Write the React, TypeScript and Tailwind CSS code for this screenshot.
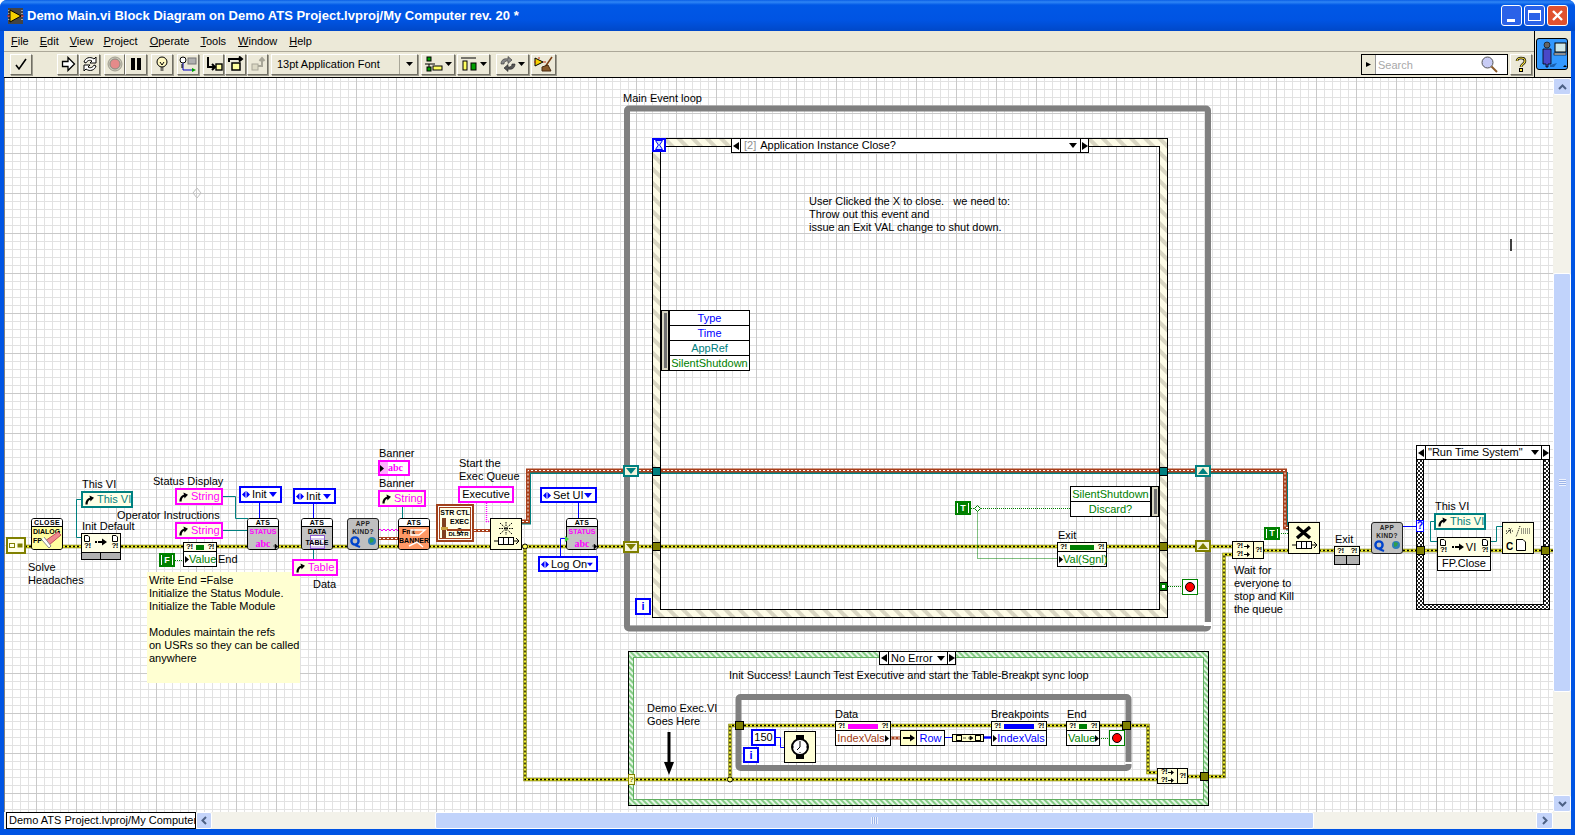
import React from 'react';

const Label: React.FC<{ className: string; children: React.ReactNode }> = ({ className, children }) => (
  <div className={`absolute whitespace-pre leading-[13px] text-black ${className}`}>{children}</div>
);

const Q = () => <span className="text-[8px] font-bold leading-[8px] tracking-[-0.5px] text-black">?!</span>;

const Tip: React.FC<{ dir: 'l' | 'r' }> = ({ dir }) => (
  <svg width="4" height="7" viewBox="0 0 4 7" className="shrink-0"><path d={dir === 'l' ? 'M0 0 L4 3.5 L0 7 Z' : 'M0 0 L4 3.5 L0 7 Z'} fill="#000" /></svg>
);

// property node: ?! row with a coloured bar over a text row
const PropNode: React.FC<{ className: string; bar: string; textClass: string; text: string; tip: 'l' | 'r' }> = ({ className, bar, textClass, text, tip }) => (
  <div className={`absolute flex flex-col border border-black bg-white ${className}`}>
    <div className="flex h-[9px] items-center justify-between border-b border-black bg-[#ffffe6] px-[2px]">
      <Q />
      <div className={`h-[5px] ${bar}`} />
      <Q />
    </div>
    <div className={`flex flex-1 items-center justify-between whitespace-pre px-[1px] text-[11px] leading-none ${textClass}`}>
      {tip === 'l' && <Tip dir="l" />}
      <span className="flex-1 text-center">{text}</span>
      {tip === 'r' && <Tip dir="r" />}
    </div>
  </div>
);

const RefArrow = () => (
  <svg width="9" height="10" viewBox="0 0 9 10" className="shrink-0">
    <path d="M1.5 9.5 C1.5 5.5 3 4 6 3.5" fill="none" stroke="#000" strokeWidth="2.2" />
    <path d="M4.5 0.5 L9 2.8 L5.5 6.5 Z" fill="#000" />
  </svg>
);

const RefBox: React.FC<{ className: string; children: React.ReactNode }> = ({ className, children }) => (
  <div className={`absolute flex items-center gap-[3px] whitespace-pre border-[2px] bg-[#ffffe6] pl-[2px] text-[11px] ${className}`}>
    <RefArrow />
    {children}
  </div>
);

const EnumBox: React.FC<{ className: string; text: string }> = ({ className, text }) => (
  <div className={`absolute flex items-center justify-between whitespace-pre border-[2px] border-[#0000ff] bg-white pl-[1px] pr-[3px] text-[11px] text-black ${className}`}>
    <span className="flex items-center gap-[2px]">
      <svg width="8" height="7" viewBox="0 0 8 7"><path d="M3.5 0 L0 3.5 L3.5 7 Z M4.5 0 L8 3.5 L4.5 7 Z" fill="#0000ff" /></svg>
      {text}
    </span>
    <svg width="8" height="5" viewBox="0 0 8 5"><path d="M0 0 H8 L4 5 Z" fill="#0000ff" /></svg>
  </div>
);

const SubVi: React.FC<{ className: string; title: string; bodyClass: string; children: React.ReactNode }> = ({ className, title, bodyClass, children }) => (
  <div className={`absolute flex h-[32px] w-[32px] flex-col overflow-hidden rounded-[3px] border border-black ${className}`}>
    <div className="flex h-[8px] items-center justify-center border-b border-black bg-white text-[7px] font-bold leading-none tracking-[0.4px]">{title}</div>
    <div className={`relative flex-1 ${bodyClass}`}>{children}</div>
  </div>
);

const StatusBody = () => (
  <>
    <div className="pt-[1px] text-center text-[7px] font-bold leading-[8px] text-[#ff00ff]">STATUS</div>
    <div className="mt-[3px] text-center text-[10px] font-bold leading-[9px] text-[#ff00ff] [font-family:'Liberation_Serif',serif]">abc</div>
    <svg width="5" height="5" viewBox="0 0 5 5" className="absolute bottom-0 right-0"><path d="M0 2 H3 M2 0 L5 2.5 L2 5 Z" fill="#000" stroke="#000" strokeWidth="0.5" /></svg>
  </>
);

const AppKind: React.FC<{ className: string }> = ({ className }) => (
  <div className={`absolute h-[32px] w-[32px] rounded-[3px] border border-[#222] bg-[#c0c0c0] ${className}`}>
    <div className="pt-[1px] text-center text-[6.5px] font-bold leading-[7.5px] tracking-[0.3px] text-[#222]">APP<br />KIND?</div>
    <svg width="30" height="14" viewBox="0 0 30 14" className="absolute bottom-0 left-0">
      <circle cx="7" cy="6" r="3.6" fill="none" stroke="#0044cc" strokeWidth="2.4" />
      <path d="M7 10 L12 12" stroke="#0044cc" strokeWidth="2" />
      <circle cx="24" cy="6" r="4" fill="#2c7fb8" />
      <path d="M22 3 L26 4 L25 7 L22 8 Z" fill="#2e9e4a" />
    </svg>
  </div>
);

const btnCls = 'flex h-[21px] shrink-0 items-center border border-t-white border-l-white border-r-[#716f64] border-b-[#716f64] bg-[#ece9d8] shadow-[1px_1px_0_#9d9b8e]';

const ToolBtn: React.FC<{ className: string; children?: React.ReactNode }> = ({ className, children }) => (
  <div className={`${btnCls} justify-center ${className}`}>{children}</div>
);

const Triangle = () => (
  <svg width="7" height="4" viewBox="0 0 7 4" className="ml-[2px]"><path d="M0 0 H7 L3.5 4 Z" fill="#000" /></svg>
);

const Ico: React.FC<{ w?: number; h?: number; children: React.ReactNode }> = ({ w = 16, h = 16, children }) => (
  <svg width={w} height={h} viewBox={`0 0 ${w} ${h}`}>{children}</svg>
);

const Toolbar = () => (
  <div className="flex h-[24px] items-center pl-[6px]">
    <ToolBtn className="w-[22px]">
      <Ico><path d="M3 9 L6 13 L13 3" fill="none" stroke="#000" strokeWidth="1.6" /></Ico>
    </ToolBtn>
    <ToolBtn className="ml-[25px] w-[21px]">
      <Ico><path d="M2.5 5.5 H8 V1.5 L14.5 8 L8 14.5 V10.5 H2.5 Z" fill="#fff" stroke="#000" strokeWidth="1.3" /></Ico>
    </ToolBtn>
    <ToolBtn className="ml-[1px] w-[21px]">
      <Ico>
        <path d="M2 6 C3 2 8 0 12 3 L14 1 V7 H8 L10 5 C8 3.5 5 4.5 4 7 Z" fill="#fff" stroke="#000" />
        <path d="M14 10 C13 14 8 16 4 13 L2 15 V9 H8 L6 11 C8 12.5 11 11.5 12 9 Z" fill="#fff" stroke="#000" />
      </Ico>
    </ToolBtn>
    <ToolBtn className="ml-[4px] w-[21px] bg-[#d8d5c4]">
      <Ico>
        <circle cx="8" cy="8" r="7" fill="#c9c7b8" stroke="#a09e90" />
        <circle cx="8" cy="8" r="5" fill="#e58a8a" stroke="#8a8a80" />
      </Ico>
    </ToolBtn>
    <ToolBtn className="w-[22px]">
      <Ico><rect x="3" y="2" width="4" height="12" fill="#000" /><rect x="9" y="2" width="4" height="12" fill="#000" /></Ico>
    </ToolBtn>
    <ToolBtn className="ml-[4px] w-[22px]">
      <Ico>
        <circle cx="8" cy="6" r="5" fill="#fff8c0" stroke="#000" />
        <path d="M6 6 L8 9 L10 6 M6.5 12 H9.5 M6.5 14 H9.5" fill="none" stroke="#000" />
      </Ico>
    </ToolBtn>
    <ToolBtn className="ml-[4px] w-[22px]">
      <Ico w={18} h={17}>
        <circle cx="4" cy="4" r="3" fill="#fff" stroke="#000" />
        <path d="M4 7 V14 H14" fill="none" stroke="#0000c0" />
        <rect x="9" y="2" width="8" height="6" fill="#b0b0b0" stroke="#777" />
        <path d="M4 9 H2 M4 11 H2" stroke="#000" />
        <path d="M13 12 L17 14 L13 16 Z" fill="#00a000" />
      </Ico>
    </ToolBtn>
    <ToolBtn className="ml-[4px] w-[21px]">
      <Ico w={18} h={16}>
        <path d="M3 1 V11 H9 M7 8 L10 11 L7 14" fill="none" stroke="#000" strokeWidth="2" />
        <rect x="11" y="8" width="6" height="6" fill="#ffffa0" stroke="#000" strokeWidth="1.4" />
      </Ico>
    </ToolBtn>
    <ToolBtn className="ml-[1px] w-[21px]">
      <Ico>
        <path d="M1 6 V3 H13 M11 0.5 L14 3 L11 5.5" fill="none" stroke="#000" strokeWidth="2" />
        <rect x="4" y="7" width="8" height="7" fill="#ffffa0" stroke="#000" strokeWidth="1.5" />
      </Ico>
    </ToolBtn>
    <ToolBtn className="ml-[1px] w-[21px]">
      <Ico>
        <rect x="2" y="8" width="6" height="6" fill="#dcd9c5" stroke="#a8a698" />
        <path d="M8 10 H12 V3 M9.5 5 L12 2 L14.5 5" fill="none" stroke="#a8a698" strokeWidth="2" />
      </Ico>
    </ToolBtn>
    <div className={`${btnCls} ml-[3px] w-[147px] justify-between pl-[5px]`}>
      <span className="whitespace-pre text-[11px] text-black">13pt Application Font</span>
      <span className="flex h-full w-[18px] items-center justify-center border-l border-[#a8a698]"><Triangle /></span>
    </div>
    <ToolBtn className="ml-[3px] w-[34px]">
      <Ico w={18} h={16}>
        <rect x="2" y="1" width="4" height="4" fill="#00a000" stroke="#000" />
        <path d="M0 8 H10 M4 8 V11" stroke="#000" />
        <rect x="8" y="10" width="9" height="4" fill="#ffff60" stroke="#000" />
        <rect x="2" y="11" width="4" height="4" fill="#00a000" stroke="#000" />
      </Ico>
      <Triangle />
    </ToolBtn>
    <ToolBtn className="ml-[2px] w-[33px]">
      <Ico w={18} h={16}>
        <path d="M1 2 H16" stroke="#000" />
        <rect x="3" y="5" width="4" height="9" fill="#ffff60" stroke="#000" />
        <rect x="11" y="7" width="5" height="7" fill="#00a000" stroke="#000" />
      </Ico>
      <Triangle />
    </ToolBtn>
    <ToolBtn className="ml-[6px] w-[33px]">
      <Ico>
        <path d="M1 8 C1 4 4 2 8 3 V0.5 L12 4 L8 7.5 V5 C5.5 4.5 4 6 4 8 Z" fill="#888" stroke="#333" strokeWidth="0.6" />
        <path d="M15 8 C15 12 12 14 8 13 V15.5 L4 12 L8 8.5 V11 C10.5 11.5 12 10 12 8 Z" fill="#555" stroke="#222" strokeWidth="0.6" />
      </Ico>
      <Triangle />
    </ToolBtn>
    <ToolBtn className="ml-[2px] w-[25px]">
      <Ico w={20} h={16}>
        <path d="M1 2 L9 6 L1 10 Z" fill="#f6d100" stroke="#000" />
        <path d="M0 6 H2 M9 6 H12 M5 1 V3" stroke="#c03010" />
        <path d="M18 1 L11 11" stroke="#7a3c10" strokeWidth="1.5" />
        <path d="M8 11 L14 9 L17 15 H8 Z" fill="#8a5a2b" stroke="#4a2a10" />
      </Ico>
    </ToolBtn>
    <div className="ml-auto flex h-[21px] w-[147px] border border-black bg-white">
      <div className="flex w-[14px] items-center justify-center border-r border-[#999] bg-[#ece9d8]">
        <svg width="5" height="5" viewBox="0 0 5 5"><path d="M0 0 L5 2.5 L0 5 Z" fill="#000" /></svg>
      </div>
      <span className="flex-1 pl-[2px] text-[11px] leading-[20px] text-[#a8a8a8]">Search</span>
      <svg width="17" height="17" viewBox="0 0 17 17" className="mr-[9px] mt-[1px]">
        <circle cx="6.5" cy="6.5" r="5.5" fill="#c8ccf5" stroke="#555" />
        <path d="M10.5 10.5 L16 16" stroke="#8a5a2b" strokeWidth="2" />
      </svg>
    </div>
    <ToolBtn className="ml-[2px] mr-[2px] w-[22px]">
      <svg width="12" height="16" viewBox="0 0 12 16">
        <path d="M2 5 C2 1 10 1 10 5 C10 8 6 8 6 11" fill="none" stroke="#000" strokeWidth="2.6" />
        <path d="M2 5 C2 1 10 1 10 5 C10 8 6 8 6 11" fill="none" stroke="#ffe640" strokeWidth="1.2" />
        <rect x="4.5" y="12.5" width="3" height="3" fill="#ffe640" stroke="#000" />
      </svg>
    </ToolBtn>
  </div>
);

const menus = ['File', 'Edit', 'View', 'Project', 'Operate', 'Tools', 'Window', 'Help'];
const menuGaps = ['mr-[11px]', 'mr-[11px]', 'mr-[10px]', 'mr-[12px]', 'mr-[11px]', 'mr-[12px]', 'mr-[12px]', ''];

// wire, structure and tunnel artwork of the block diagram, in page coordinates
const Wires = () => {
  const err = [
    'M25 546.5 H1232',
    'M1263 550.5 H1553',
    'M525 546.5 V779.5 H1157',
    'M730 779.5 V725.5 H1148 V772.5 H1157',
    'M1187 776.5 H1224 V554.5 H1233',
  ];
  return (
    <svg width="1575" height="835" viewBox="0 0 1575 835" className="absolute left-0 top-0">
      <defs>
        <pattern id="ev" width="10" height="10" patternUnits="userSpaceOnUse" patternTransform="rotate(-45)">
          <rect width="10" height="10" fill="#fdfbe6" />
          <rect width="4" height="10" fill="#d9d6c2" />
        </pattern>
        <pattern id="seq" width="4" height="4" patternUnits="userSpaceOnUse" patternTransform="rotate(-45)">
          <rect width="4" height="4" fill="#e6f7e6" />
          <rect width="2" height="4" fill="#86cc86" />
        </pattern>
        <pattern id="chk" width="4" height="4" patternUnits="userSpaceOnUse">
          <rect width="4" height="4" fill="#fff" />
          <rect width="2" height="2" fill="#222" />
          <rect x="2" y="2" width="2" height="2" fill="#222" />
        </pattern>
      </defs>
      {/* while loops */}
      <rect x="627" y="108.5" width="581" height="520" fill="none" stroke="#808080" strokeWidth="6" rx="2" />
      <rect x="1204" y="622" width="8" height="4" fill="#fff" />
      <rect x="738.5" y="697" width="390" height="71" fill="none" stroke="#808080" strokeWidth="6" rx="2" />
      <rect x="1125" y="762" width="7" height="2" fill="#fff" />
      {/* event, flat sequence and case frames */}
      <path fillRule="evenodd" d="M652.5 138.5 H1167.5 V617.5 H652.5 Z M660.5 146.5 V609.5 H1159.5 V146.5 Z" fill="url(#ev)" stroke="#000" shapeRendering="crispEdges" />
      <path fillRule="evenodd" d="M628.5 651.5 H1208.5 V805.5 H628.5 Z M633.5 657.5 V799.5 H1203.5 V657.5 Z" fill="url(#seq)" />
      <rect x="628.5" y="651.5" width="580" height="154" fill="none" stroke="#000" shapeRendering="crispEdges" />
      <rect x="633.5" y="657.5" width="570" height="142" fill="none" stroke="#5fae5f" shapeRendering="crispEdges" />
      <path fillRule="evenodd" d="M1416.5 445.5 H1549.5 V609.5 H1416.5 Z M1423.5 459.5 V604.5 H1543.5 V459.5 Z" fill="url(#chk)" stroke="#000" shapeRendering="crispEdges" />

      {/* queue reference */}
      <path d="M522 523.5 H530 V473 H1287 V529.5 H1289" fill="none" stroke="#008080" strokeWidth="2" />
      <path d="M522 521.5 H528 V470.5 H1285 V527.5 H1289" fill="none" stroke="#a8401c" strokeWidth="4" />
      <path d="M522 521.5 H528 V470.5 H1285 V527.5 H1289" fill="none" stroke="#fff" strokeWidth="1" strokeDasharray="2 2" />
      {/* error clusters */}
      {err.map(d => (
        <g key={d} fill="none">
          <path d={d} stroke="#808000" strokeWidth="3.4" />
          <path d={d} stroke="#f4f430" strokeWidth="2" />
          <path d={d} stroke="#000" strokeWidth="1.4" strokeDasharray="2 2" />
        </g>
      ))}
      <circle cx="525" cy="546.5" r="2.5" fill="#ffff60" stroke="#000" />
      <circle cx="730" cy="779.5" r="2.5" fill="#ffff60" stroke="#000" />

      {/* blue numeric and enum wires */}
      <g fill="none" stroke="#0000ff" strokeWidth="1">
        <path d="M259.5 502 V518 M313.5 504 V518 M578.5 503 V518 M560.5 556 V538.5 H567" />
        <path d="M776 737.5 H780.5 V747.5 H785 M944 737.5 H952" />
        <path d="M1403 526.5 H1416" />
      </g>
      <path d="M983 737.5 H992" stroke="#0000ff" strokeWidth="2.4" />
      {/* VI server reference wires */}
      <g fill="none" stroke="#008080" strokeWidth="1">
        <path d="M81 499.5 H76.5 V537.5 H82" />
        <path d="M223 496.5 H235.5 V518.5 H248 M223 530.5 H248" />
        <path d="M313.5 549 V560 M402.5 507 V519" />
        <path d="M1435 521.5 H1430.5 V541.5 H1438 M1491 541.5 H1496.5 V526.5 H1503" />
      </g>
      {/* refnum and string wires */}
      <path d="M379 538.5 H399" stroke="#a8401c" strokeWidth="3" />
      <path d="M379 538.5 H399" stroke="#fff" strokeWidth="1" strokeDasharray="2 2" />
      <path d="M474 530.5 H490" stroke="#a8401c" strokeWidth="3" />
      <path d="M474 530.5 H490" stroke="#fff" strokeWidth="1" strokeDasharray="2 2" />
      <path d="M890 738 H901" stroke="#a8401c" strokeWidth="3" />
      <path d="M890 738 H901" stroke="#fff" strokeWidth="1" strokeDasharray="2 2" />
      <path d="M379 530 q1 -2 2 0 t2 0 t2 0 t2 0 t2 0 t2 0 t2 0 t2 0 t2 0 t2 0" fill="none" stroke="#ff00ff" />
      <path d="M486.5 503 V521.5 H490" fill="none" stroke="#ff00ff" strokeDasharray="1 1" strokeWidth="1.4" />
      {/* boolean wires */}
      <g fill="none" stroke="#008000" strokeDasharray="1 1">
        <path d="M175 560.5 H184" />
        <path d="M971 508.5 H1070 M977.5 508.5 V558.5 H1058" />
        <path d="M1168 586.5 H1183" />
        <path d="M1099 738.5 H1110" />
        <path d="M1279 533.5 H1289" />
      </g>
      <path d="M977.5 505.5 L980.5 508.5 L977.5 511.5 L974.5 508.5 Z" fill="#fff" stroke="#008000" />
      {/* the arrow note */}
      <path d="M669 732 V764" stroke="#000" strokeWidth="3" />
      <path d="M664 762 H674 L669 775 Z" fill="#000" />
      {/* diagram grid marker and text cursor */}
      <path d="M197 188 L201 193 L197 198 L193 193 Z" fill="none" stroke="#c0c0c0" />
      <path d="M1511 239 V251" stroke="#000" strokeWidth="1.5" />
    </svg>
  );
};

const TunnelUp: React.FC<{ className: string; fill: string }> = ({ className, fill }) => (
  <div className={`absolute flex h-[12px] w-[16px] items-center justify-center border-2 bg-[#f4f4dc] ${className}`}>
    <svg width="10" height="6" viewBox="0 0 10 6"><path d={fill === 'down' ? 'M0 0 H10 L5 6 Z' : 'M0 6 H10 L5 0 Z'} fill="currentColor" /></svg>
  </div>
);

const Tun: React.FC<{ className: string }> = ({ className }) => (
  <div className={`absolute h-[9px] w-[9px] border border-black ${className}`} />
);

const EventRows: React.FC<{ className: string; rows: { t: string; c: string }[]; side: 'l' | 'r' }> = ({ className, rows, side }) => (
  <div className={`absolute flex ${side === 'r' ? 'flex-row-reverse' : ''} ${className}`}>
    <div className="flex w-[8px] justify-center border border-black bg-[#d9d6c2] py-[2px]">
      <div className="w-[3px] bg-[#707070]" />
    </div>
    <div className="flex min-w-0 flex-1 flex-col border border-black bg-white">
      {rows.map(r => (
        <div key={r.t} className={`flex min-h-0 flex-1 items-center justify-center whitespace-pre border-b border-black text-[11px] leading-none last:border-b-0 ${r.c}`}>{r.t}</div>
      ))}
    </div>
  </div>
);

const Diagram = () => (
  <div className="absolute left-[-5px] top-[-78px] h-[835px] w-[1575px] text-[11px]">
    <Wires />

    {/* left cluster */}
    <div className="absolute left-[6px] top-[537px] flex h-[17px] w-[20px] items-center justify-center border-2 border-[#808000] bg-[#ffffe6]">
      <svg width="14" height="7" viewBox="0 0 14 7"><rect x="0.5" y="1.5" width="5" height="4" fill="none" stroke="#808000" /><rect x="8.5" y="1.5" width="5" height="4" fill="#808000" /></svg>
    </div>
    <SubVi className="left-[31px] top-[518px]" title="CLOSE" bodyClass="bg-[#ffffa0]">
      <div className="pl-[1px] text-[7px] font-bold leading-[9px] text-black">DIALOG<br />FP</div>
      <svg width="24" height="18" viewBox="0 0 24 18" className="absolute bottom-0 right-0">
        <path d="M20 1 L23 4 L11 14 L7 10 Z" fill="#f08a90" stroke="#c05060" />
        <path d="M6 6 L13 15 L11 17 L4 9" fill="#fff" stroke="#888" />
      </svg>
    </SubVi>
    <Label className="left-[28px] top-[561px]">Solve{'\n'}Headaches</Label>

    <Label className="left-[82px] top-[478px]">This VI</Label>
    <RefBox className="left-[81px] top-[491px] h-[17px] w-[52px] border-[#008080] text-[#008080]">This VI</RefBox>
    <Label className="left-[82px] top-[520px]">Init Default</Label>
    <div className="absolute left-[81px] top-[533px] flex h-[27px] w-[40px] flex-col border border-black">
      <div className="flex h-[18px] items-start justify-between bg-[#ffffe6] px-[2px] pt-[1px]">
        <div className="flex flex-col items-center leading-[8px]">
          <svg width="6" height="7" viewBox="0 0 6 7"><path d="M0.5 0.5 H4 L5.5 2 V6.5 H0.5 Z" fill="#fff" stroke="#000" /></svg>
          <Q />
        </div>
        <svg width="12" height="8" viewBox="0 0 12 8" className="mt-[3px]"><path d="M0 3 H2 V5 H0 Z M3 3 H7 V0.5 L12 4 L7 7.5 V5 H3 Z" fill="#000" /></svg>
        <div className="flex flex-col items-center leading-[8px]">
          <svg width="6" height="7" viewBox="0 0 6 7"><path d="M0.5 0.5 H4 L5.5 2 V6.5 H0.5 Z" fill="#fff" stroke="#000" /></svg>
          <Q />
        </div>
      </div>
      <div className="flex flex-1 border-t border-black bg-[#b0b0b0]">
        <div className="w-[19px] border-r border-black" />
      </div>
    </div>

    <Label className="left-[153px] top-[475px]">Status Display</Label>
    <RefBox className="left-[175px] top-[488px] h-[17px] w-[48px] border-[#ff00ff] text-[#ff00ff]">String</RefBox>
    <Label className="left-[117px] top-[509px]">Operator Instructions</Label>
    <RefBox className="left-[175px] top-[522px] h-[17px] w-[48px] border-[#ff00ff] text-[#ff00ff]">String</RefBox>
    <EnumBox className="left-[239px] top-[486px] h-[17px] w-[43px]" text="Init" />
    <SubVi className="left-[247px] top-[518px]" title="ATS" bodyClass="bg-[#c4c4c4]"><StatusBody /></SubVi>

    <PropNode className="left-[183px] top-[542px] h-[25px] w-[34px]" bar="w-[8px] bg-[#008000]" textClass="text-[#008000]" text="Value" tip="l" />
    <div className="absolute left-[159px] top-[553px] flex h-[14px] w-[16px] items-center justify-center border-2 border-[#008000] bg-white">
      <span className="flex h-[10px] w-[10px] items-center justify-center bg-[#008000] text-[9px] font-bold leading-none text-white">F</span>
    </div>
    <Label className="left-[218px] top-[553px]">End</Label>

    <div className="absolute left-[147px] top-[572px] h-[111px] w-[153px] whitespace-pre bg-[#ffffd2] pl-[2px] pt-[2px] leading-[13px] text-black">
      {'Write End =False\nInitialize the Status Module.\nInitialize the Table Module\n\nModules maintain the refs\non USRs so they can be called\nanywhere'}
    </div>

    {/* table module */}
    <EnumBox className="left-[293px] top-[488px] h-[16px] w-[43px]" text="Init" />
    <SubVi className="left-[301px] top-[518px]" title="ATS" bodyClass="bg-[#c4c4c4]">
      <div className="pt-[1px] text-center text-[7px] font-bold leading-[8px] text-black">DATA</div>
      <div className="absolute left-[8px] top-[8px] h-[14px] w-[15px] border border-[#8a5ad0] bg-[repeating-linear-gradient(0deg,#d8c8f0_0_2px,#fff_2px_4px)]" />
      <div className="absolute inset-x-0 top-[12px] text-center text-[7px] font-bold leading-[8px] text-black">TABLE</div>
    </SubVi>
    <RefBox className="left-[292px] top-[559px] h-[17px] w-[46px] border-[#ff00ff] text-[#ff00ff]">Table</RefBox>
    <Label className="left-[313px] top-[578px]">Data</Label>

    <AppKind className="left-[347px] top-[518px]" />

    {/* banner */}
    <Label className="left-[379px] top-[447px]">Banner</Label>
    <div className="absolute left-[378px] top-[460px] flex h-[16px] w-[32px] border-2 border-[#ff00ff] bg-white">
      <div className="flex w-[8px] items-center bg-[#ffb0ff]">
        <svg width="4" height="7" viewBox="0 0 4 7"><path d="M0 0 L4 3.5 L0 7 Z" fill="#000" /></svg>
      </div>
      <span className="text-[10px] font-bold leading-[11px] text-[#ff00ff] [font-family:'Liberation_Serif',serif]">abc</span>
    </div>
    <Label className="left-[379px] top-[477px]">Banner</Label>
    <RefBox className="left-[378px] top-[490px] h-[17px] w-[48px] border-[#ff00ff] text-[#ff00ff]">String</RefBox>
    <SubVi className="left-[398px] top-[518px]" title="ATS" bodyClass="bg-[#ff9966]">
      <div className="pl-[3px] pt-[1px] text-[7px] font-bold leading-[8px] text-black">Fmt</div>
      <div className="mt-[1px] text-center text-[7px] font-bold leading-[8px] text-black">BANNER</div>
      <svg width="28" height="21" viewBox="0 0 28 21" className="absolute left-0 top-0">
        <path d="M12 3 H26 L20 8 H12 Z M10 19 L18 15 L24 20" fill="none" stroke="#fff" strokeWidth="1.4" />
      </svg>
    </SubVi>

    {/* exec queue */}
    <Label className="left-[459px] top-[457px]">Start the{'\n'}Exec Queue</Label>
    <div className="absolute left-[458px] top-[486px] flex h-[17px] w-[56px] items-center justify-center border-[2px] border-[#ff00ff] bg-white text-[11px] text-black">Executive</div>
    <div className="absolute left-[436px] top-[504px] h-[38px] w-[38px] border-2 border-[#a0401c] bg-white p-[1px]">
      <div className="relative h-full w-full border border-[#a0401c] bg-[#ffffe6]">
        <div className="text-center text-[7px] font-bold leading-[9px] text-black">STR CTL</div>
        <div className="absolute left-[2px] top-[10px] h-[20px] w-[4px] bg-[#804020]" />
        <div className="absolute left-[1px] top-[19px] h-[3px] w-[7px] bg-[#c8a040]" />
        <div className="absolute left-[10px] top-[9px] text-center text-[7px] font-bold leading-[9px] text-black">EXEC<br />Q</div>
        <div className="absolute bottom-0 left-[7px] right-0 border-t-2 border-[#a0401c] text-center text-[6px] font-bold leading-[7px]">DLSTR</div>
      </div>
    </div>
    <div className="absolute left-[490px] top-[518px] h-[32px] w-[32px] border border-black bg-[#ffffd8]">
      <svg width="30" height="30" viewBox="0 0 30 30">
        <path d="M15 3 V16 M9 4 L21 15 M21 4 L9 15 M8 9.5 H22" stroke="#000" strokeDasharray="1.5 1" />
        <path d="M3 22 H7 M23 22 H28 M25 19 L28 22 L25 25" fill="none" stroke="#000" />
        <rect x="7.5" y="18.5" width="15" height="7" fill="#fff" stroke="#000" />
        <path d="M12.5 18.5 V25.5 M17.5 18.5 V25.5" stroke="#000" />
      </svg>
    </div>
    <EnumBox className="left-[540px] top-[487px] h-[16px] w-[57px]" text="Set UI" />
    <EnumBox className="left-[538px] top-[556px] h-[16px] w-[60px]" text="Log On" />
    <SubVi className="left-[566px] top-[518px]" title="ATS" bodyClass="bg-[#c4c4c4]"><StatusBody /></SubVi>
    <div className="absolute left-[565px] top-[536px] h-0 w-0 border-y-[3px] border-l-[4px] border-y-transparent border-l-[#40e040]" />

    {/* main event loop */}
    <Label className="left-[623px] top-[92px]">Main Event loop</Label>
    <div className="absolute left-[652px] top-[138px] flex h-[14px] w-[14px] items-center justify-center border-2 border-[#0000ff] bg-white">
      <svg width="8" height="10" viewBox="0 0 8 10"><path d="M0.5 0.5 H7.5 L4.6 5 L7.5 9.5 H0.5 L3.4 5 Z" fill="#cce0ff" stroke="#0000ff" /></svg>
    </div>
    <div className="absolute left-[731px] top-[138px] flex h-[15px] w-[358px] items-center border border-black bg-white">
      <div className="flex h-full w-[9px] items-center justify-center border-r border-black bg-white">
        <svg width="6" height="8" viewBox="0 0 6 8"><path d="M6 0 L0 4 L6 8 Z" fill="#000" /></svg>
      </div>
      <span className="ml-[3px] whitespace-pre text-[#909090]">[2]</span>
      <span className="ml-[4px] whitespace-pre text-black">Application Instance Close?</span>
      <svg width="8" height="5" viewBox="0 0 8 5" className="ml-auto mr-[3px]"><path d="M0 0 H8 L4 5 Z" fill="#000" /></svg>
      <div className="flex h-full w-[8px] items-center justify-center border-l border-black bg-white">
        <svg width="6" height="8" viewBox="0 0 6 8"><path d="M0 0 L6 4 L0 8 Z" fill="#000" /></svg>
      </div>
    </div>
    <Label className="left-[809px] top-[195px]">{'User Clicked the X to close.   we need to:\nThrow out this event and\nissue an Exit VAL change to shut down.'}</Label>

    <EventRows
      className="left-[661px] top-[310px] h-[61px] w-[89px]"
      side="l"
      rows={[
        { t: 'Type', c: 'text-[#0000ff]' },
        { t: 'Time', c: 'text-[#0000ff]' },
        { t: 'AppRef', c: 'text-[#008080]' },
        { t: 'SilentShutdown', c: 'text-[#008000]' },
      ]}
    />
    <EventRows
      className="left-[1070px] top-[486px] h-[31px] w-[89px]"
      side="r"
      rows={[
        { t: 'SilentShutdown', c: 'text-[#008000]' },
        { t: 'Discard?', c: 'text-[#008000]' },
      ]}
    />
    <div className="absolute left-[955px] top-[501px] flex h-[14px] w-[16px] items-center justify-center border-2 border-[#008000] bg-white">
      <span className="flex h-[10px] w-[10px] items-center justify-center bg-[#008000] text-[9px] font-bold leading-none text-white">T</span>
    </div>
    <Label className="left-[1058px] top-[529px]">Exit</Label>
    <PropNode className="left-[1057px] top-[542px] h-[25px] w-[50px]" bar="w-[24px] bg-[#008000]" textClass="text-[#008000]" text="Val(Sgnl)" tip="l" />

    {/* tunnels on the event structure and shift registers of the loop */}
    <TunnelUp className="left-[623px] top-[465px] border-[#008080] text-[#008080]" fill="down" />
    <TunnelUp className="left-[623px] top-[541px] border-[#808000] text-[#808000]" fill="down" />
    <TunnelUp className="left-[1195px] top-[465px] border-[#008080] text-[#008080]" fill="up" />
    <TunnelUp className="left-[1195px] top-[540px] border-[#808000] text-[#808000]" fill="up" />
    <Tun className="left-[652px] top-[467px] bg-[#008080]" />
    <Tun className="left-[652px] top-[542px] bg-[#808000]" />
    <Tun className="left-[1159px] top-[467px] bg-[#008080]" />
    <Tun className="left-[1159px] top-[542px] bg-[#808000]" />
    <div className="absolute left-[1159px] top-[582px] flex h-[9px] w-[9px] items-center justify-center border border-black bg-[#008000]">
      <div className="h-[3px] w-[3px] bg-white" />
    </div>
    <div className="absolute left-[1182px] top-[579px] flex h-[16px] w-[16px] items-center justify-center border border-[#008000] bg-white">
      <div className="h-[10px] w-[10px] rounded-full border border-black bg-[#ff0000]" />
    </div>
    <div className="absolute left-[635px] top-[598px] flex h-[17px] w-[16px] items-center justify-center border-[2px] border-[#0000ff] bg-white text-[11px] font-bold leading-none text-[#0000ff]">i</div>

    {/* init success frame */}
    <div className="absolute left-[879px] top-[651px] flex h-[14px] w-[77px] items-center border border-black bg-white">
      <div className="flex h-full w-[9px] items-center justify-center border-r border-black">
        <svg width="6" height="8" viewBox="0 0 6 8"><path d="M6 0 L0 4 L6 8 Z" fill="#000" /></svg>
      </div>
      <span className="ml-[2px] whitespace-pre text-black">No Error</span>
      <svg width="8" height="5" viewBox="0 0 8 5" className="ml-auto mr-[2px]"><path d="M0 0 H8 L4 5 Z" fill="#000" /></svg>
      <div className="flex h-full w-[8px] items-center justify-center border-l border-black">
        <svg width="6" height="8" viewBox="0 0 6 8"><path d="M0 0 L6 4 L0 8 Z" fill="#000" /></svg>
      </div>
    </div>
    <Label className="left-[729px] top-[669px]">Init Success! Launch Test Executive and start the Table-Breakpt sync loop</Label>
    <Label className="left-[647px] top-[702px]">Demo Exec.VI{'\n'}Goes Here</Label>
    <div className="absolute left-[628px] top-[774px] flex h-[11px] w-[7px] items-center justify-center border border-[#808000] bg-[#ffffc0] text-[8px] font-bold leading-none text-[#808000]">?</div>

    <Tun className="left-[735px] top-[721px] bg-[#808000]" />
    <Tun className="left-[1122px] top-[721px] bg-[#808000]" />
    <div className="absolute left-[751px] top-[729px] flex h-[17px] w-[25px] items-center justify-center border-[2px] border-[#0000ff] bg-white text-[11px] leading-none text-black">150</div>
    <div className="absolute left-[743px] top-[747px] flex h-[16px] w-[16px] items-center justify-center border-[2px] border-[#0000ff] bg-white text-[11px] font-bold leading-none text-[#0000ff]">i</div>
    <div className="absolute left-[784px] top-[731px] flex h-[32px] w-[32px] items-center justify-center border border-black bg-[#ffffd8]">
      <svg width="18" height="24" viewBox="0 0 18 24">
        <rect x="5" y="0" width="8" height="24" fill="#000" />
        <circle cx="9" cy="12" r="8" fill="#fff" stroke="#000" strokeWidth="2" />
        <path d="M9 6 V12 L6 15 M2 12 H3 M15 12 H16 M9 17 V18" fill="none" stroke="#000" />
      </svg>
    </div>
    <Label className="left-[835px] top-[708px]">Data</Label>
    <PropNode className="left-[835px] top-[721px] h-[25px] w-[56px]" bar="w-[30px] bg-[#ff00ff]" textClass="text-[#a03c14]" text="IndexVals" tip="r" />
    <div className="absolute left-[900px] top-[730px] flex h-[16px] w-[45px] border border-black bg-white">
      <div className="flex w-[16px] items-center justify-center border-r border-black bg-[#ffffc8]">
        <svg width="12" height="8" viewBox="0 0 12 8"><path d="M0 3 H7 V0.5 L12 4 L7 7.5 V5 H0 Z" fill="#000" /></svg>
      </div>
      <span className="flex-1 text-center text-[11px] leading-[14px] text-[#0000ff]">Row</span>
    </div>
    <div className="absolute left-[952px] top-[734px] flex h-[8px] w-[32px] items-center justify-center border border-black bg-[#ffffc8]">
      <svg width="26" height="6" viewBox="0 0 26 6"><rect x="1.5" y="0.5" width="5" height="5" fill="none" stroke="#000" /><path d="M8 3 H11 M13 3 H15 M15 1 L18 3 L15 5 Z" stroke="#000" fill="#000" strokeWidth="0.7" /><rect x="20.5" y="0.5" width="5" height="5" fill="none" stroke="#000" /></svg>
    </div>
    <Label className="left-[991px] top-[708px]">Breakpoints</Label>
    <PropNode className="left-[991px] top-[721px] h-[25px] w-[56px]" bar="w-[30px] bg-[#0000ff]" textClass="text-[#0000ff]" text="IndexVals" tip="l" />
    <Label className="left-[1067px] top-[708px]">End</Label>
    <PropNode className="left-[1066px] top-[721px] h-[25px] w-[34px]" bar="w-[8px] bg-[#008000]" textClass="text-[#008000]" text="Value" tip="r" />
    <div className="absolute left-[1109px] top-[730px] flex h-[16px] w-[16px] items-center justify-center border border-[#008000] bg-white">
      <div className="h-[10px] w-[10px] rounded-full border border-black bg-[#ff0000]" />
    </div>

    {/* merge errors / kill queue */}
    <div className="absolute left-[1157px] top-[768px] flex h-[16px] w-[31px] border border-black bg-[#ffffd8]">
      <div className="flex w-[20px] flex-col items-center justify-center border-r border-black">
        <span className="flex items-center gap-[1px] leading-[7px]"><Q /><svg width="6" height="5" viewBox="0 0 6 5"><path d="M0 2 H3 V0 L6 2.5 L3 5 V3 H0 Z" fill="#000" /></svg></span>
        <span className="flex items-center gap-[1px] leading-[7px]"><Q /><svg width="6" height="5" viewBox="0 0 6 5"><path d="M0 2 H3 V0 L6 2.5 L3 5 V3 H0 Z" fill="#000" /></svg></span>
      </div>
      <div className="flex flex-1 items-center justify-center"><Q /></div>
    </div>
    <Tun className="left-[1200px] top-[772px] bg-[#808000]" />

    <div className="absolute left-[1232px] top-[541px] flex h-[18px] w-[32px] border border-black bg-[#ffffd8]">
      <div className="flex w-[21px] flex-col items-center justify-center border-r border-black">
        <span className="flex items-center gap-[1px] leading-[7px]"><Q /><svg width="6" height="5" viewBox="0 0 6 5"><path d="M0 2 H3 V0 L6 2.5 L3 5 V3 H0 Z" fill="#000" /></svg></span>
        <span className="flex items-center gap-[1px] leading-[7px]"><Q /><svg width="6" height="5" viewBox="0 0 6 5"><path d="M0 2 H3 V0 L6 2.5 L3 5 V3 H0 Z" fill="#000" /></svg></span>
      </div>
      <div className="flex flex-1 items-center justify-center"><Q /></div>
    </div>
    <Label className="left-[1234px] top-[564px]">{'Wait for\neveryone to\nstop and Kill\nthe queue'}</Label>
    <div className="absolute left-[1264px] top-[527px] flex h-[13px] w-[16px] items-center justify-center border-2 border-[#008000] bg-white">
      <span className="flex h-[9px] w-[10px] items-center justify-center bg-[#008000] text-[9px] font-bold leading-none text-white">T</span>
    </div>
    <div className="absolute left-[1288px] top-[522px] h-[32px] w-[32px] border border-black bg-[#ffffd8]">
      <svg width="30" height="30" viewBox="0 0 30 30">
        <path d="M8 4 L21 15 M21 4 L8 15" stroke="#000" strokeWidth="3.4" />
        <path d="M3 22 H7 M23 22 H28 M25 19 L28 22 L25 25" fill="none" stroke="#000" />
        <rect x="7.5" y="18.5" width="15" height="7" fill="#fff" stroke="#000" />
        <path d="M12.5 18.5 V25.5 M17.5 18.5 V25.5" stroke="#000" />
      </svg>
    </div>
    <Label className="left-[1335px] top-[533px]">Exit</Label>
    <div className="absolute left-[1334px] top-[546px] flex h-[19px] w-[26px] flex-col border border-black">
      <div className="flex h-[9px] items-center justify-between border-b border-black bg-[#ffffe6] px-[2px]"><Q /><Q /></div>
      <div className="flex flex-1 bg-[#b0b0b0]"><div className="w-[12px] border-r border-black" /></div>
    </div>
    <AppKind className="left-[1371px] top-[522px]" />

    {/* run time system case */}
    <div className="absolute left-[1416px] top-[445px] flex h-[15px] w-[134px] items-center border border-black bg-white">
      <div className="flex h-full w-[9px] items-center justify-center border-r border-black">
        <svg width="6" height="8" viewBox="0 0 6 8"><path d="M6 0 L0 4 L6 8 Z" fill="#000" /></svg>
      </div>
      <span className="ml-[2px] whitespace-pre text-black">&quot;Run Time System&quot;</span>
      <svg width="8" height="5" viewBox="0 0 8 5" className="ml-auto mr-[2px]"><path d="M0 0 H8 L4 5 Z" fill="#000" /></svg>
      <div className="flex h-full w-[8px] items-center justify-center border-l border-black">
        <svg width="6" height="8" viewBox="0 0 6 8"><path d="M0 0 L6 4 L0 8 Z" fill="#000" /></svg>
      </div>
    </div>
    <div className="absolute left-[1416px] top-[520px] flex h-[12px] w-[8px] items-center justify-center border border-[#0000ff] bg-white text-[10px] font-bold leading-none text-[#0000ff]">?</div>
    <Tun className="left-[1416px] top-[546px] bg-[#808000]" />
    <Tun className="left-[1541px] top-[546px] bg-[#808000]" />
    <Label className="left-[1435px] top-[500px]">This VI</Label>
    <RefBox className="left-[1434px] top-[513px] h-[17px] w-[52px] border-[#008080] text-[#008080]">This VI</RefBox>
    <div className="absolute left-[1437px] top-[537px] flex h-[34px] w-[54px] flex-col border border-black bg-white">
      <div className="flex h-[19px] items-start justify-between border-b border-black bg-[#ffffe6] px-[2px] pt-[1px]">
        <div className="flex flex-col items-center leading-[8px]">
          <svg width="6" height="7" viewBox="0 0 6 7"><path d="M0.5 0.5 H4 L5.5 2 V6.5 H0.5 Z" fill="#fff" stroke="#000" /></svg>
          <Q />
        </div>
        <span className="mt-[1px] flex items-center gap-[2px] text-[11px] leading-[14px]">
          <svg width="12" height="8" viewBox="0 0 12 8"><path d="M0 3 H2 V5 H0 Z M3 3 H7 V0.5 L12 4 L7 7.5 V5 H3 Z" fill="#000" /></svg>
          VI
        </span>
        <div className="flex flex-col items-center leading-[8px]">
          <svg width="6" height="7" viewBox="0 0 6 7"><path d="M0.5 0.5 H4 L5.5 2 V6.5 H0.5 Z" fill="#fff" stroke="#000" /></svg>
          <Q />
        </div>
      </div>
      <div className="flex flex-1 items-center justify-center text-[11px] leading-none text-black">FP.Close</div>
    </div>
    <div className="absolute left-[1502px] top-[522px] h-[32px] w-[32px] border border-black bg-[#ffffd8]">
      <svg width="30" height="14" viewBox="0 0 30 14" className="absolute left-0 top-[2px]">
        <path d="M3 6 H10 M6 3 L8 9 M3 9 L9 3 M17 1 L13 12" stroke="#000" strokeDasharray="1 1" fill="none" />
        <path d="M18 4 H28 M18 6 H28 M18 8 H28" stroke="#333" strokeDasharray="1 1" />
      </svg>
      <span className="absolute bottom-[1px] left-[3px] text-[10px] font-bold leading-none text-black">C</span>
      <svg width="10" height="12" viewBox="0 0 10 12" className="absolute bottom-[2px] right-[7px]"><path d="M0.5 0.5 H7 L9.5 3 V11.5 H0.5 Z" fill="#fff" stroke="#000" /></svg>
    </div>
  </div>
);

export default function App() {
  return (
    <div className="flex h-[835px] w-[1575px] flex-col overflow-hidden rounded-t-[7px] bg-[#0054e3] [font-family:'Liberation_Sans',sans-serif] text-[11px] text-black">
      {/* title bar */}
      <div className="flex h-[31px] shrink-0 items-center bg-[linear-gradient(#0a5fe6_0,#2f86f5_2px,#0058e6_5px,#0054e3_20px,#0048c8_31px)] pl-[7px] pr-[7px]">
        <svg width="17" height="16" viewBox="0 0 17 16">
          <rect x="1" y="0" width="15" height="16" fill="#444" />
          <path d="M2 2 V14 M15 2 V14" stroke="#fff" strokeDasharray="1 2" />
          <path d="M3 2 L14 8 L3 14 Z" fill="#f6d100" stroke="#000" />
          <path d="M0 8 H3 M14 8 H17" stroke="#e02010" />
        </svg>
        <span className="ml-[3px] whitespace-pre text-[13px] font-bold text-white">Demo Main.vi Block Diagram on Demo ATS Project.lvproj/My Computer rev. 20 *</span>
        <div className="ml-auto flex gap-[2px]">
          <div className="flex h-[21px] w-[21px] items-end rounded-[3px] border border-white bg-[#2a62e8] pb-[3px] pl-[5px]"><div className="h-[3px] w-[8px] bg-white" /></div>
          <div className="flex h-[21px] w-[21px] items-center justify-center rounded-[3px] border border-white bg-[#2a62e8]"><div className="h-[11px] w-[13px] border border-t-[3px] border-white" /></div>
          <div className="flex h-[21px] w-[21px] items-center justify-center rounded-[3px] border border-white bg-[#e0512f]">
            <svg width="13" height="13" viewBox="0 0 13 13"><path d="M2 2 L11 11 M11 2 L2 11" stroke="#fff" strokeWidth="2.4" /></svg>
          </div>
        </div>
      </div>

      <div className="ml-[4px] mr-[4px] flex min-h-0 flex-1 flex-col">
        {/* menu and tool bars */}
        <div className="flex h-[47px] shrink-0 border-b border-black bg-[#ece9d8]">
          <div className="flex min-w-0 flex-1 flex-col">
            <div className="flex h-[21px] items-center border-b border-[#aca899] pl-[7px]">
              {menus.map((m, i) => (
                <span key={m} className={menuGaps[i]}>
                  <span className="underline">{m[0]}</span>{m.slice(1)}
                </span>
              ))}
            </div>
            <Toolbar />
          </div>
          <div className="flex w-[37px] items-center justify-start border-l border-black pl-[1px]">
            <div className="relative h-[32px] w-[32px] rounded-[3px] border border-black bg-[#3399ff]">
              <svg width="30" height="30" viewBox="0 0 30 30">
                <circle cx="10" cy="6" r="3" fill="#666" stroke="#000" strokeWidth="0.6" />
                <path d="M6 10 H14 V25 H11 V28 H9 V25 H6 Z" fill="#4848c8" stroke="#000" strokeWidth="0.8" />
                <path d="M13 26 L20 24 L17 28 H13 Z" fill="#1a60b0" />
                <rect x="18" y="4" width="11" height="9" fill="#cfe8e8" stroke="#000" />
                <rect x="17" y="14" width="12" height="2" fill="#ccc" stroke="#000" strokeWidth="0.6" />
                <path d="M26 28 L30 28 L28 26 Z" fill="#000" />
              </svg>
            </div>
          </div>
        </div>

        {/* diagram canvas */}
        <div className="flex min-h-0 flex-1">
          <div className="w-[1px] shrink-0 bg-[#808080]" />
          <div className="relative min-w-0 flex-1 overflow-hidden bg-white bg-[linear-gradient(#c9c9c9_1px,transparent_1px),linear-gradient(90deg,#c9c9c9_1px,transparent_1px),linear-gradient(#e2e2e2_1px,transparent_1px),linear-gradient(90deg,#e2e2e2_1px,transparent_1px)] bg-[size:40px_40px,40px_40px,8px_8px,8px_8px] bg-[position:31px_35px,31px_35px,7px_3px,7px_3px]">
            <Diagram />
          </div>
          <div className="flex w-[18px] shrink-0 flex-col bg-[#f3f2ea]">
            <div className="flex h-[17px] shrink-0 items-center justify-center rounded-[2px] border border-white bg-[#c4d4fa]">
              <svg width="9" height="6" viewBox="0 0 9 6"><path d="M1 5 L4.5 1.5 L8 5" fill="none" stroke="#4d6185" strokeWidth="2" /></svg>
            </div>
            <div className="h-[178px] shrink-0" />
            <div className="flex h-[419px] shrink-0 items-center justify-center rounded-[2px] border border-white bg-[#c1d3fb]">
              <div className="h-[7px] w-[7px] bg-[repeating-linear-gradient(0deg,#eef3ff_0_1px,#9db4e8_1px_2px)]" />
            </div>
            <div className="flex-1" />
            <div className="flex h-[17px] shrink-0 items-center justify-center rounded-[2px] border border-white bg-[#c4d4fa]">
              <svg width="9" height="6" viewBox="0 0 9 6"><path d="M1 1 L4.5 4.5 L8 1" fill="none" stroke="#4d6185" strokeWidth="2" /></svg>
            </div>
          </div>
        </div>

        {/* project bar and bottom scrollbar */}
        <div className="flex h-[17px] shrink-0 bg-[#f3f2ea]">
          <div className="ml-[2px] flex w-[190px] shrink-0 items-center overflow-hidden whitespace-pre border border-black bg-white pl-[2px] text-[11px] text-black">Demo ATS Project.lvproj/My Computer</div>
          <div className="flex w-[16px] shrink-0 items-center justify-center rounded-[2px] border border-white bg-[#c4d4fa]">
            <svg width="6" height="9" viewBox="0 0 6 9"><path d="M5 1 L1.5 4.5 L5 8" fill="none" stroke="#4d6185" strokeWidth="2" /></svg>
          </div>
          <div className="w-[223px] shrink-0" />
          <div className="flex w-[879px] shrink-0 items-center justify-center rounded-[2px] border border-white bg-[#c1d3fb]">
            <div className="h-[7px] w-[7px] bg-[repeating-linear-gradient(90deg,#eef3ff_0_1px,#9db4e8_1px_2px)]" />
          </div>
          <div className="flex-1" />
          <div className="flex w-[17px] shrink-0 items-center justify-center rounded-[2px] border border-white bg-[#c4d4fa]">
            <svg width="6" height="9" viewBox="0 0 6 9"><path d="M1 1 L4.5 4.5 L1 8" fill="none" stroke="#4d6185" strokeWidth="2" /></svg>
          </div>
          <div className="w-[18px] shrink-0" />
        </div>
      </div>
      <div className="h-[6px] shrink-0" />
    </div>
  );
}
